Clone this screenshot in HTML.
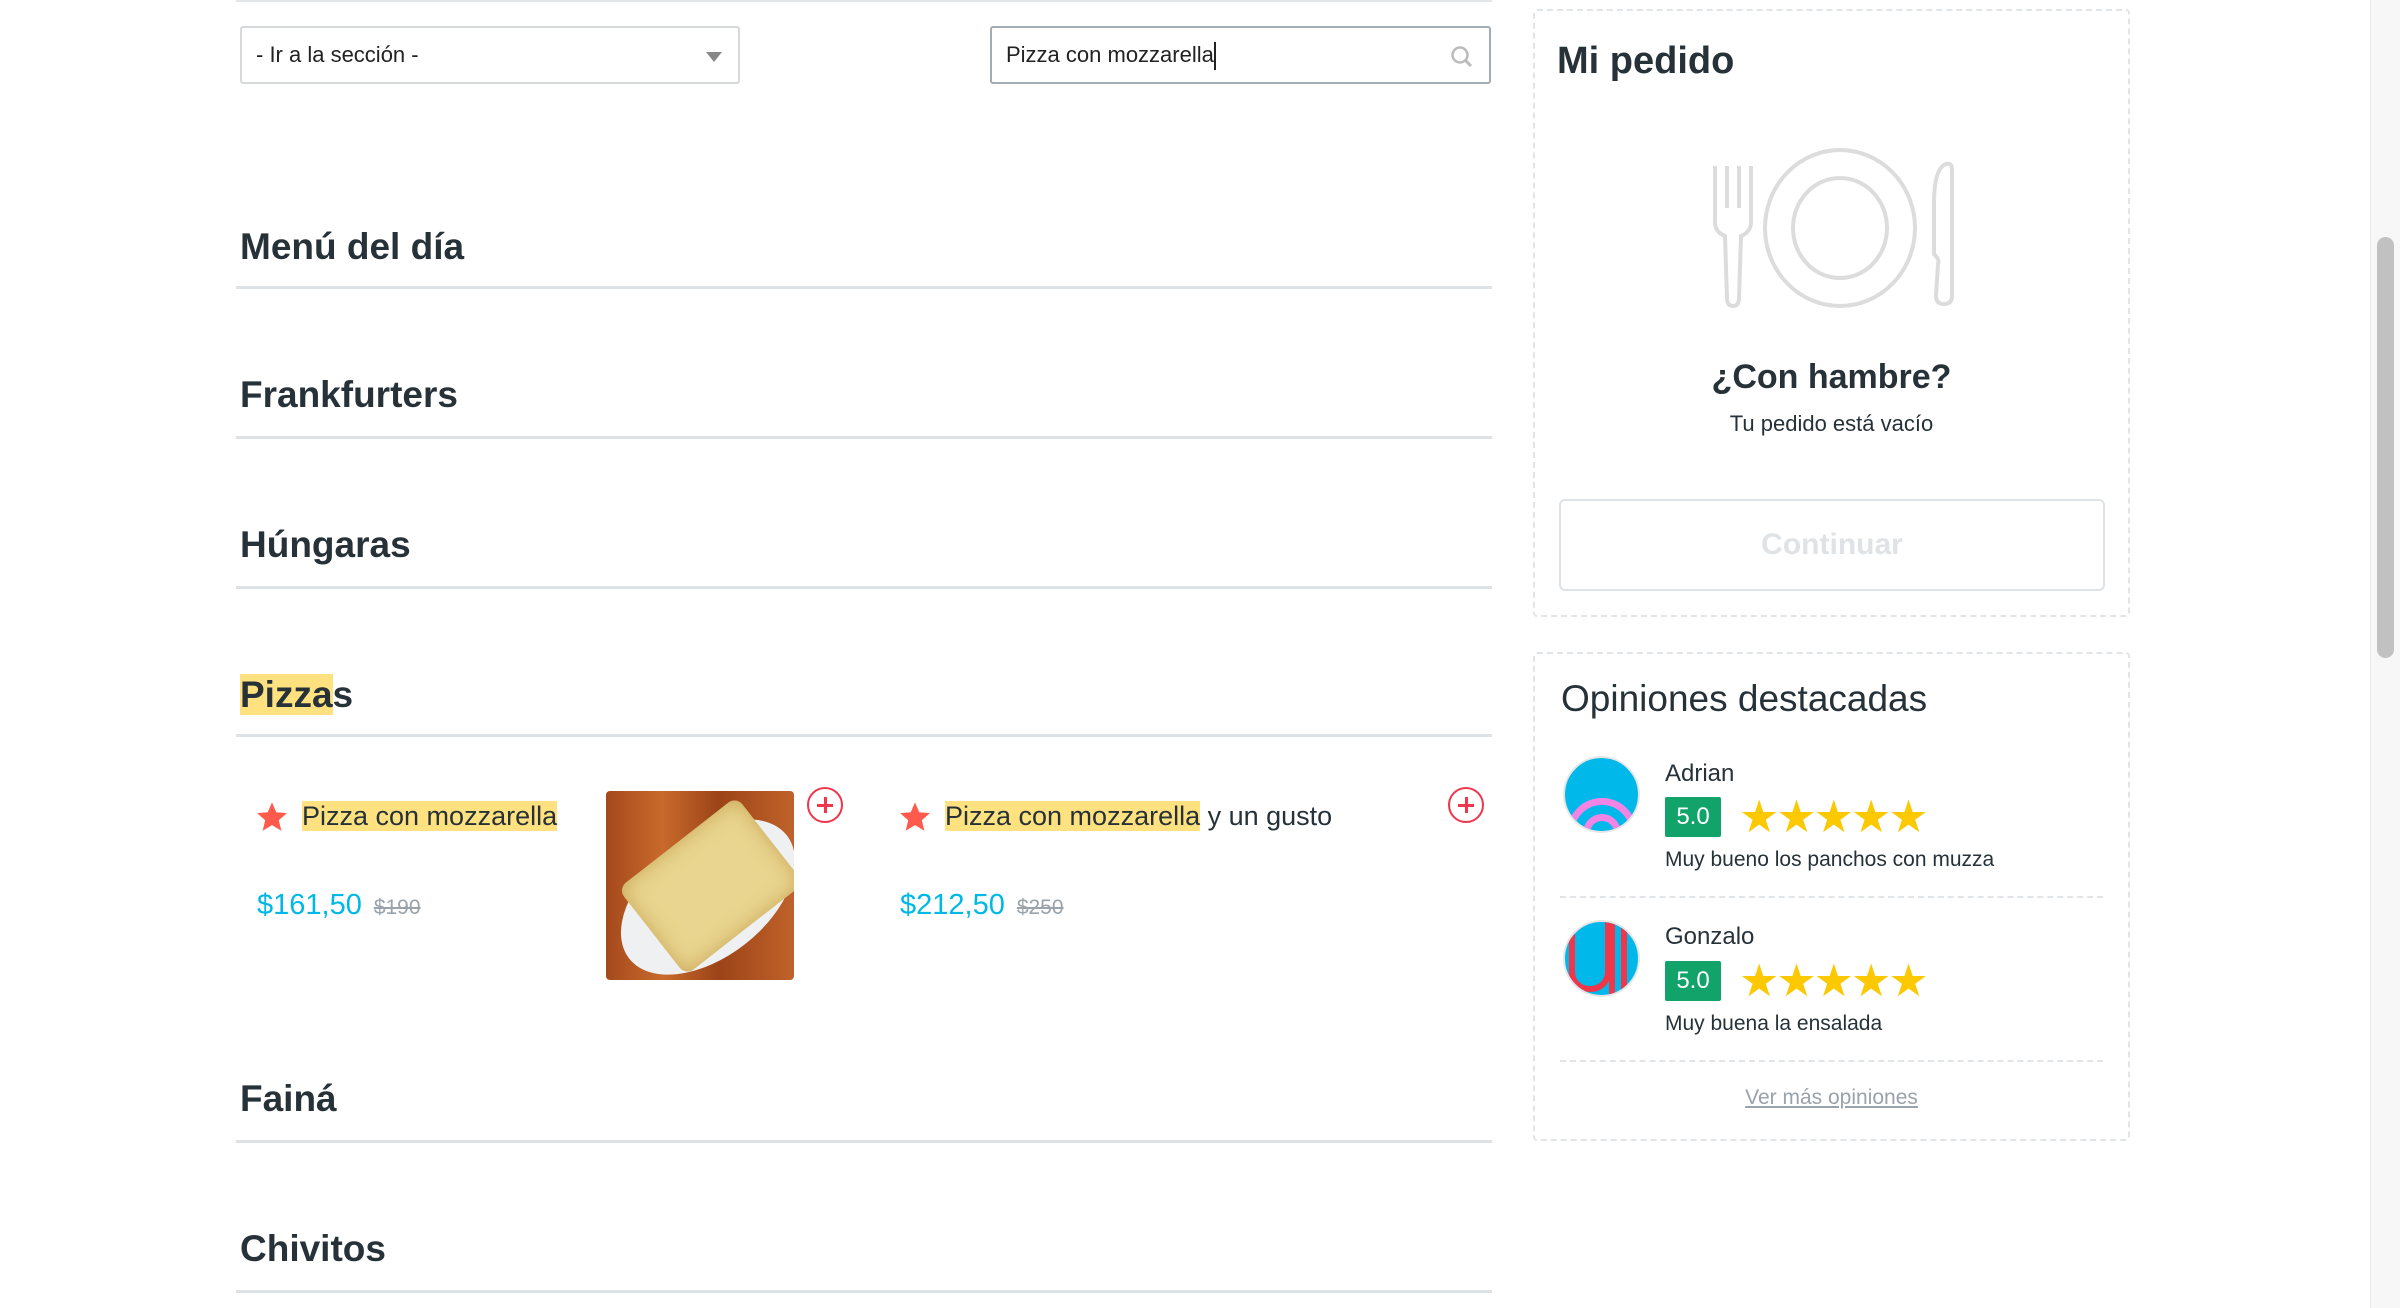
<!DOCTYPE html>
<html><head><meta charset="utf-8"><style>
*{margin:0;padding:0;box-sizing:border-box}
body{width:2400px;height:1308px;background:#fff;position:relative;overflow:hidden;font-family:"Liberation Sans",sans-serif;color:#263238}
.a{position:absolute}
.h{position:absolute;left:240px;font-size:37px;font-weight:bold;line-height:50px;color:#263238}
.d{position:absolute;left:236px;width:1256px;height:3px;background:#dde2e6}
.t{font-size:27px;line-height:40px;white-space:nowrap}
.hl{background:#ffe17f}
.price{font-size:29px;color:#00b8e6;line-height:40px}
.old{font-size:21px;color:#9aa2aa;text-decoration:line-through;margin-left:12px}
.plus{position:absolute;width:36px;height:36px;border:2px solid #f0364b;border-radius:50%;}
.plus:before{content:"";position:absolute;left:8px;top:15px;width:16px;height:2.5px;background:#f0364b}
.plus:after{content:"";position:absolute;left:15px;top:8px;width:2.5px;height:16px;background:#f0364b}
.badge{position:absolute;width:56px;height:40px;background:#11a36a;color:#fff;font-size:24px;line-height:40px;text-align:center;border-radius:2px}
.stars{position:absolute;color:#fcc800;font-size:45px;line-height:40px;letter-spacing:-3px}
</style></head><body>
<div class="a" style="left:236px;top:0;width:1256px;height:2px;background:#e3e6e8"></div>
<div class="a" style="left:240px;top:26px;width:500px;height:58px;border:2px solid #d6d9db;border-radius:3px;font-size:22px;line-height:54px;padding-left:14px;color:#222">- Ir a la sección -
<div class="a" style="right:16px;top:24px;width:0;height:0;border-left:8px solid transparent;border-right:8px solid transparent;border-top:10px solid #888"></div></div>
<div class="a" style="left:990px;top:26px;width:501px;height:58px;border:2px solid #a4abb1;border-radius:3px;font-size:22px;line-height:54px;padding-left:14px;color:#222">Pizza con mozzarella<span style="display:inline-block;width:2px;height:28px;background:#222;vertical-align:middle"></span>
<svg class="a" style="right:14px;top:16px" width="26" height="26" viewBox="0 0 26 26"><circle cx="11" cy="11" r="7.5" fill="none" stroke="#bbb" stroke-width="2.5"/><path d="M16 16l6 6" stroke="#bbb" stroke-width="3"/></svg></div>

<div class="h" style="top:222px">Menú del día</div><div class="d" style="top:286px"></div>
<div class="h" style="top:370px">Frankfurters</div><div class="d" style="top:436px"></div>
<div class="h" style="top:520px">Húngaras</div><div class="d" style="top:586px"></div>
<div class="h" style="top:670px"><span class="hl">Pizza</span>s</div><div class="d" style="top:734px"></div>
<div class="h" style="top:1074px">Fainá</div><div class="d" style="top:1140px"></div>
<div class="h" style="top:1224px">Chivitos</div><div class="d" style="top:1290px"></div>

<svg class="a" style="left:256px;top:801px" width="32" height="32" viewBox="0 0 24 24"><path d="M12 1l3.2 7.4 8 .7-6.1 5.3 1.9 7.9L12 18.1 5 22.3l1.9-7.9L.8 9.1l8-.7z" fill="#ff5a4c"/></svg>
<div class="a t" style="left:302px;top:796px"><span class="hl">Pizza con mozzarella</span></div>
<div class="a price" style="left:257px;top:885px">$161,50<span class="old">$190</span></div>
<div class="a" style="left:606px;top:791px;width:188px;height:189px;border-radius:4px;overflow:hidden;background:linear-gradient(90deg,#a4491c,#c96a2c 30%,#9c4418 60%,#c0622a);">
<div class="a" style="left:2px;top:46px;width:200px;height:120px;border-radius:50%;background:#eef0f2;transform:rotate(-38deg)"></div>
<div class="a" style="left:30px;top:40px;width:150px;height:110px;background:#e9d58f;transform:rotate(-38deg);border-radius:10px;box-shadow:inset 0 0 20px #c9a658"></div>
</div>
<div class="plus" style="left:807px;top:787px"></div>

<svg class="a" style="left:899px;top:801px" width="32" height="32" viewBox="0 0 24 24"><path d="M12 1l3.2 7.4 8 .7-6.1 5.3 1.9 7.9L12 18.1 5 22.3l1.9-7.9L.8 9.1l8-.7z" fill="#ff5a4c"/></svg>
<div class="a t" style="left:945px;top:796px"><span class="hl">Pizza con mozzarella</span> y un gusto</div>
<div class="a price" style="left:900px;top:885px">$212,50<span class="old">$250</span></div>
<div class="plus" style="left:1448px;top:787px"></div>

<div class="a" style="left:1533px;top:9px;width:597px;height:608px;border:2px dashed #e2e5e8;border-radius:4px"></div>
<div class="a" style="left:1557px;top:36px;font-size:38px;font-weight:bold;line-height:50px">Mi pedido</div>
<svg class="a" style="left:1712px;top:146px" width="242" height="164" viewBox="0 0 242 164" fill="none" stroke="#dcdcdc" stroke-width="4">
<ellipse cx="128" cy="82" rx="75" ry="78"/><ellipse cx="128" cy="82" rx="47" ry="50"/>
<path d="M3 20v56q0 10 10 14l2 62q0 8 6 8t6-8l2-62q10-4 10-14v-56M15 20v42M27 20v42"/>
<path d="M234 18q-12 4-12 40v50q6 6 4 10l-2 32q0 8 8 8t8-8v-126q0-8-6-6z"/>
</svg>
<div class="a" style="left:1533px;width:597px;top:354px;text-align:center;font-size:34px;font-weight:bold;line-height:46px">¿Con hambre?</div>
<div class="a" style="left:1533px;width:597px;top:410px;text-align:center;font-size:22px;line-height:28px">Tu pedido está vacío</div>
<div class="a" style="left:1559px;top:499px;width:546px;height:92px;border:2px solid #dfe3e6;border-radius:6px;text-align:center;line-height:88px;font-size:30px;font-weight:bold;color:#dfe3e6">Continuar</div>

<div class="a" style="left:1533px;top:652px;width:597px;height:489px;border:2px dashed #e2e5e8;border-radius:4px"></div>
<div class="a" style="left:1561px;top:676px;font-size:37px;line-height:46px">Opiniones destacadas</div>

<div class="a" style="left:1563px;top:756px;width:77px;height:77px;border-radius:50%;overflow:hidden;background:#00b9ea;border:2px solid #e6e6e6">
<div class="a" style="left:2px;top:40px;width:70px;height:70px;border-radius:50%;border:7px solid #f284e6;box-shadow:0 0 0 7px #00b9ea inset"></div>
<div class="a" style="left:18px;top:56px;width:38px;height:38px;border-radius:50%;border:7px solid #f284e6"></div></div>
<div class="a" style="left:1665px;top:759px;font-size:24px;line-height:30px">Adrian</div>
<div class="badge" style="left:1665px;top:797px">5.0</div>
<div class="stars" style="left:1739px;top:797px">★★★★★</div>
<div class="a" style="left:1665px;top:846px;font-size:21px;line-height:28px">Muy bueno los panchos con muzza</div>
<div class="a" style="left:1560px;top:896px;width:543px;border-top:2px dashed #e2e5e8"></div>

<div class="a" style="left:1563px;top:920px;width:77px;height:77px;border-radius:50%;overflow:hidden;background:#00b9ea;border:2px solid #e6e6e6">
<div class="a" style="left:4px;top:-10px;width:42px;height:80px;border:6px solid #f0364b;border-top:none;border-radius:0 0 20px 20px"></div>
<div class="a" style="left:44px;top:0;width:6px;height:80px;background:#f0364b"></div>
<div class="a" style="left:56px;top:0;width:6px;height:80px;background:#f0364b"></div></div>
<div class="a" style="left:1665px;top:922px;font-size:24px;line-height:30px">Gonzalo</div>
<div class="badge" style="left:1665px;top:961px">5.0</div>
<div class="stars" style="left:1739px;top:961px">★★★★★</div>
<div class="a" style="left:1665px;top:1010px;font-size:21px;line-height:28px">Muy buena la ensalada</div>
<div class="a" style="left:1560px;top:1060px;width:543px;border-top:2px dashed #e2e5e8"></div>
<div class="a" style="left:1533px;width:597px;top:1084px;text-align:center;font-size:21px;line-height:28px;color:#9aa2aa;text-decoration:underline">Ver más opiniones</div>

<div class="a" style="left:2370px;top:0;width:30px;height:1308px;background:#f7f7f7;border-left:1px solid #ececec"></div>
<div class="a" style="left:2377px;top:237px;width:17px;height:421px;background:#c1c1c1;border-radius:9px"></div>
</body></html>
